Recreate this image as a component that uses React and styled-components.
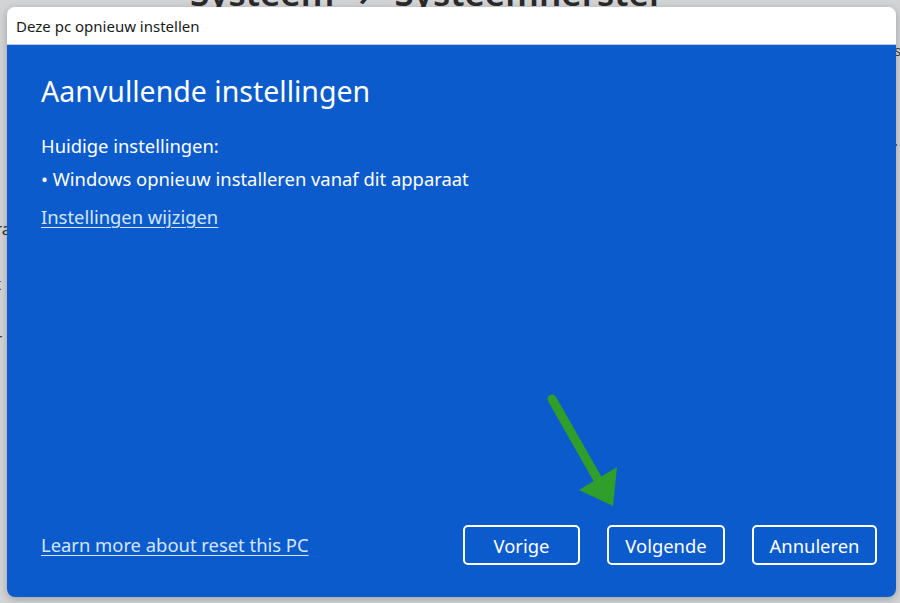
import React from "react";
import styled, { createGlobalStyle } from "styled-components";

const Global = createGlobalStyle`
  html, body { margin: 0; padding: 0; }
  body {
    width: 900px; height: 603px; overflow: hidden;
    background: #d3d4d6;
    font-family: "Noto Sans", "Open Sans", sans-serif;
  }
`;

const Page = styled.div`
  position: relative;
  width: 900px;
  height: 603px;
  overflow: hidden;
  background: #d3d4d6;
`;

const BgHeader = styled.div`
  display: flex;
  align-items: baseline;
  gap: 24px;
  margin-top: -27px;
  padding-left: 190px;
  font-size: 35px;
  font-weight: 600;
  color: #2a2a2a;
  line-height: 40px;
`;

const BgSide = styled.div`
  display: flex;
  flex-direction: column;
  gap: 32px;
  padding-top: 204px;
  margin-left: -5px;
  font-size: 17px;
  color: #333;
`;

const BgRight = styled.div`
  position: absolute;
  top: 40px;
  right: 0;
  width: 6px;
  display: flex;
  flex-direction: column;
  gap: 70px;
  padding-left: 1px;
  font-size: 15px;
  color: #444;
  overflow: hidden;
`;

const Dialog = styled.div`
  position: absolute;
  left: 7px;
  top: 7px;
  width: 889px;
  height: 590px;
  border-radius: 8px;
  overflow: hidden;
  display: flex;
  flex-direction: column;
  box-shadow: 0 2px 8px rgba(0, 0, 0, 0.25);
`;

const TitleBar = styled.div`
  height: 37px;
  flex: none;
  background: #ffffff;
  display: flex;
  align-items: center;
  padding-left: 9px;
  font-size: 15px;
  color: #1a1a1a;
  border-bottom: 1px solid #b8c8e6;
`;

const Body = styled.div`
  flex: 1;
  background: #0c5bcd;
  display: flex;
  flex-direction: column;
  padding: 26px 19px 32px 34px;
  color: #ffffff;
`;

const Heading = styled.h1`
  margin: 0 0 23px 0;
  font-size: 28.5px;
  font-weight: 400;
  line-height: 40px;
`;

const Text = styled.div`
  font-size: 18.4px;
  line-height: 24px;
  margin-bottom: ${(p) => p.$mb || 0}px;
`;

const Link = styled.a`
  font-size: 18.4px;
  line-height: 24px;
  color: #d4e6ff;
  text-decoration: underline;
  text-underline-offset: 3px;
  text-decoration-thickness: 1px;
  cursor: pointer;
`;

const Footer = styled.div`
  margin-top: auto;
  display: flex;
  align-items: center;
  justify-content: space-between;
`;

const Buttons = styled.div`
  display: flex;
  gap: 27px;
`;

const Button = styled.button`
  width: ${(p) => p.$w}px;
  height: 40px;
  box-sizing: border-box;
  border: 2px solid #ffffff;
  border-radius: 5px;
  background: #0c5bcd;
  color: #ffffff;
  font-family: "Noto Sans", "Open Sans", sans-serif;
  font-size: 18.4px;
  cursor: pointer;
`;

const Arrow = styled.svg`
  position: absolute;
  left: 0;
  top: 0;
  pointer-events: none;
`;

export default function App() {
  return (
    <Page>
      <Global />
      <BgHeader>
        <span>Systeem</span>
        <span>›</span>
        <span>Systeemherstel</span>
      </BgHeader>
      <BgSide>
        <span>ra</span>
        <span>t</span>
        <span>r</span>
      </BgSide>
      <BgRight>
        <span>s</span>
        <span>.</span>
      </BgRight>
      <Dialog>
        <TitleBar>Deze pc opnieuw instellen</TitleBar>
        <Body>
          <Heading>Aanvullende instellingen</Heading>
          <Text $mb={9}>Huidige instellingen:</Text>
          <Text $mb={14}>• Windows opnieuw installeren vanaf dit apparaat</Text>
          <div>
            <Link>Instellingen wijzigen</Link>
          </div>
          <Footer>
            <Link>Learn more about reset this PC</Link>
            <Buttons>
              <Button $w={117}>Vorige</Button>
              <Button $w={118}>Volgende</Button>
              <Button $w={125}>Annuleren</Button>
            </Buttons>
          </Footer>
        </Body>
      </Dialog>
      <Arrow width="900" height="603" viewBox="0 0 900 603">
        <line x1="552" y1="399" x2="597" y2="478" stroke="#2f9e2a" strokeWidth="9" strokeLinecap="round" />
        <polygon points="579,490 617,467 613,506" fill="#2f9e2a" />
      </Arrow>
    </Page>
  );
}
